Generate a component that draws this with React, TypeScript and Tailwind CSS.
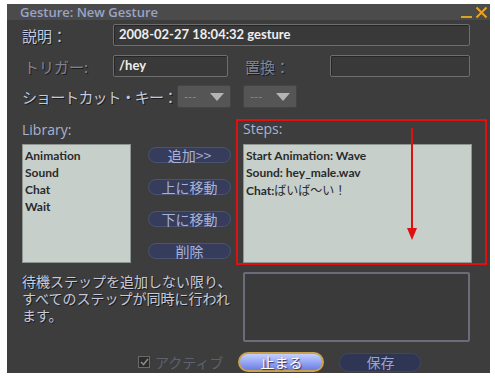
import React from "react";

const jp = { fontFamily: '"Noto Sans CJK JP", "Noto Sans", sans-serif' };
const latin = { fontFamily: 'Lato, "Noto Sans CJK JP", sans-serif' };

function Label({ children, dim = false, className = "" }: { children: React.ReactNode; dim?: boolean; className?: string }) {
  return (
    <span
      className={`text-[15px] leading-none whitespace-nowrap ${dim ? "text-[#80849a]" : "text-[#c3c8dc]"} ${className}`}
      style={{ ...jp, textShadow: "1px 1px 0 #1c1c1c" }}
    >
      {children}
    </span>
  );
}

function Input({ value, className = "" }: { value?: string; className?: string }) {
  return (
    <div
      className={`h-[22px] bg-[#393939] border border-[#6e6e6e] rounded-[2px] flex items-center pl-[5px] text-[13px] font-bold text-[#eeeeee] shadow-[inset_1px_1px_0_#262626] ${className}`}
      style={latin}
    >
      {value}
    </div>
  );
}

function Dropdown() {
  return (
    <div className="w-[54px] h-[23px] bg-[#555555] border border-[#444] rounded-[2px] flex items-center justify-between px-[6px]">
      <span className="text-[11px] text-[#8a8a8a] leading-none" style={latin}>---</span>
      <svg width="14" height="8" viewBox="0 0 14 8"><path d="M0 0 H14 L7 8 Z" fill="#b4b4b8" /></svg>
    </div>
  );
}

function NavBtn({ children }: { children: React.ReactNode }) {
  return (
    <div
      className="w-[83px] h-[16px] rounded-full bg-[#363d5c] border border-[#4a5272] flex items-center justify-center text-[14px] leading-none text-[#a9b2d6]"
      style={jp}
    >
      {children}
    </div>
  );
}

function ListBox({ items, className = "" }: { items: React.ReactNode[]; className?: string }) {
  return (
    <div
      className={`bg-[#c7cfca] border border-[#8f9590] h-[119px] pt-[2px] pl-[2px] flex flex-col text-[12px] font-bold text-[#2a2a2a] leading-[17px] ${className}`}
      style={latin}
    >
      {items.map((t, i) => (
        <span key={i} className="whitespace-nowrap">{t}</span>
      ))}
    </div>
  );
}

export default function App() {
  return (
    <div className="w-[495px] h-[378px] bg-white pl-[7px] pt-[4px]">
      <div className="relative w-[483px] h-[369px] bg-[#3d3d3d] flex flex-col">
        {/* title bar */}
        <div className="h-[16px] bg-[#4b4b4b] flex items-center justify-between pl-[13px] pr-[2px]">
          <span className="text-[13px] leading-none font-semibold text-[#9aa3c8]" style={{ fontFamily: '"Open Sans", sans-serif' }}>
            Gesture: New Gesture
          </span>
          <div className="flex items-end gap-[3px] h-full">
            <div className="w-[11px] h-[2px] bg-[#e0a020] mb-[2px]" />
            <svg width="13" height="13" viewBox="0 0 13 13" className="mb-[1px]">
              <path d="M1.5 1.5 L11.5 11.5 M11.5 1.5 L1.5 11.5" stroke="#e8a420" strokeWidth="2" />
            </svg>
          </div>
        </div>

        {/* row 1 */}
        <div className="flex items-center mt-[4px] h-[22px]">
          <Label className="ml-[15px] w-[91px]">説明：</Label>
          <Input value="2008-02-27 18:04:32 gesture" className="w-[357px]" />
        </div>

        {/* row 2 */}
        <div className="flex items-center mt-[9px] h-[22px]">
          <Label dim className="ml-[17px] w-[89px]">トリガー:</Label>
          <Input value="/hey" className="w-[115px]" />
          <Label dim className="ml-[17px] w-[85px]">置換：</Label>
          <Input className="w-[140px]" />
        </div>

        {/* row 3 */}
        <div className="flex items-center mt-[8px] h-[23px]">
          <Label className="ml-[15px] w-[155px] text-[14px] tracking-[-0.9px]">ショートカット・キー：</Label>
          <Dropdown />
          <div className="w-[12px]" />
          <Dropdown />
        </div>

        {/* main */}
        <div className="flex mt-[11px] h-[145px]">
          <div className="ml-[15px] flex flex-col w-[109px]">
            <span className="mt-[4px] h-[21px] text-[14px] leading-none text-[#aab2d4]" style={{ fontFamily: '"Open Sans", sans-serif' }}>Library:</span>
            <ListBox items={["Animation", "Sound", "Chat", "Wait"]} />
          </div>
          <div className="ml-[17px] flex flex-col gap-[16px] pt-[28px]">
            <NavBtn>追加&gt;&gt;</NavBtn>
            <NavBtn>上に移動</NavBtn>
            <NavBtn>下に移動</NavBtn>
            <NavBtn>削除</NavBtn>
          </div>
          <div className="ml-[12px] flex flex-col w-[229px]">
            <span className="mt-[3px] h-[22px] text-[14px] leading-none text-[#aab2d4]" style={{ fontFamily: '"Open Sans", sans-serif' }}>Steps:</span>
            <ListBox
              items={[
                "Start Animation: Wave",
                "Sound: hey_male.wav",
                <>
                  Chat:<span className="font-normal" style={jp}>ばいば〜い！</span>
                </>,
              ]}
            />
          </div>
        </div>

        {/* bottom text and box */}
        <div className="flex mt-[8px]">
          <p
            className="ml-[15px] w-[210px] text-[14px] leading-[17px] text-[#c6cadb] mt-[1px]"
            style={{ ...jp, textShadow: "1px 1px 0 #1c1c1c" }}
          >
            待機ステップを追加しない限り、すべてのステップが同時に行われます。
          </p>
          <div className="ml-[11px] w-[227px] h-[70px] border-2 border-[#6a6d78] rounded-[2px] bg-[#3a3a3a]" />
        </div>

        {/* footer */}
        <div className="flex items-center mt-[10px] h-[20px]">
          <div className="ml-[131px] w-[12px] h-[12px] bg-[#2c2c2c] border border-[#6a6a6a] flex items-center justify-center">
            <svg width="9" height="8" viewBox="0 0 9 8"><path d="M1 4 L3.5 6.5 L8 1" stroke="#8a8a8a" strokeWidth="1.6" fill="none" /></svg>
          </div>
          <span className="ml-[5px] text-[14px] leading-none text-[#5e6170]" style={jp}>アクティブ</span>
          <div
            className="ml-[15px] w-[86px] h-[20px] rounded-full border-2 border-[#c9a24a] bg-gradient-to-b from-[#c5d0ff] to-[#6c7de6] flex items-center justify-center text-[14px] leading-none text-white"
            style={{ ...jp, textShadow: "1px 1px 1px #303060" }}
          >
            止まる
          </div>
          <div
            className="ml-[15px] w-[82px] h-[19px] rounded-full bg-[#2f3654] border border-[#3e4566] flex items-center justify-center text-[14px] leading-none text-[#9aa4cc]"
            style={jp}
          >
            保存
          </div>
        </div>

        {/* annotation overlay */}
        <div className="absolute left-[229px] top-[115px] w-[251px] h-[146px] border-2 border-[#e01010] pointer-events-none" />
        <svg className="absolute left-[400px] top-[124px]" width="10" height="112" viewBox="0 0 10 112">
          <path d="M5 0 V104" stroke="#e01010" strokeWidth="2" />
          <path d="M0 100 L10 100 L5 112 Z" fill="#e01010" />
        </svg>
      </div>
    </div>
  );
}
